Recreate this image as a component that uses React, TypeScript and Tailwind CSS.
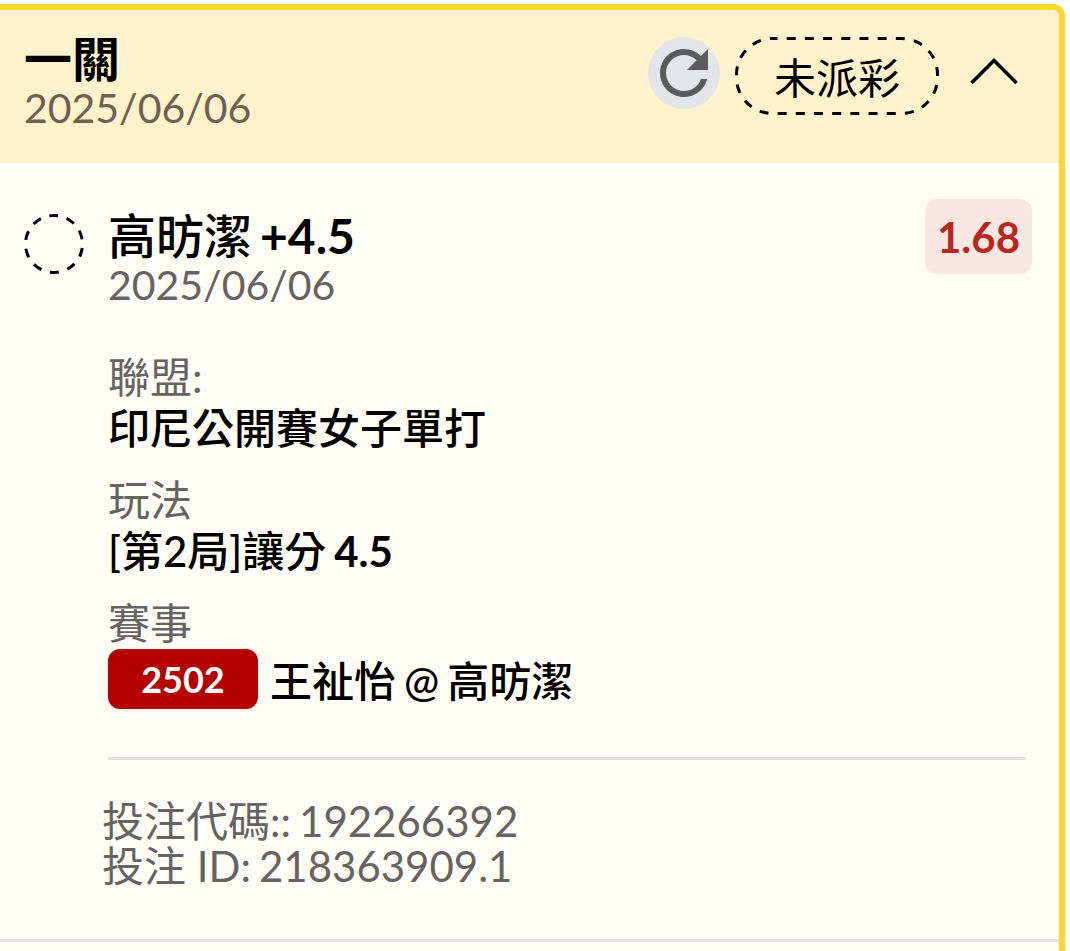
import { useState } from "react";
import { MdRefresh } from "react-icons/md";

const bet = {
  title: "一關",
  date: "2025/06/06",
  status: "未派彩",
  code: "192266392",
  id: "218363909.1",
};

const leg = {
  player: "高昉潔",
  handicap: "+4.5",
  date: "2025/06/06",
  odds: "1.68",
  league: "印尼公開賽女子單打",
  market: "[第2局]讓分",
  line: "4.5",
  eventNumber: "2502",
  away: "王祉怡",
  home: "高昉潔",
};

function StatusPill({ label }: { label: string }) {
  return (
    <div className="relative flex h-[78px] w-[204px] items-center justify-center text-[42px] leading-[48px]">
      <svg className="absolute inset-0" width="204" height="78" fill="none" aria-hidden="true">
        <rect
          x="1.5"
          y="1.5"
          width="201"
          height="75"
          rx="36"
          stroke="black"
          strokeWidth="3"
          strokeDasharray="9 9.19"
          strokeDashoffset="4"
        />
      </svg>
      <span className="pt-1">{label}</span>
    </div>
  );
}

function PendingMark() {
  return (
    <svg className="mt-[15px] shrink-0" width="60" height="60" fill="none" role="img" aria-label="未派彩">
      <circle
        cx="30"
        cy="30"
        r="28.5"
        stroke="black"
        strokeWidth="3"
        strokeDasharray="9 8.907"
        strokeDashoffset="4.5"
        transform="rotate(-91 30 30)"
      />
    </svg>
  );
}

function ChevronUp({ open }: { open: boolean }) {
  return (
    <svg className={open ? "" : "rotate-180"} width="48" height="28" fill="none" aria-hidden="true">
      <path d="M1.5 25 24 2.500 46.500 25" stroke="black" strokeWidth="3.500" />
    </svg>
  );
}

export default function App() {
  const [open, setOpen] = useState(true);

  return (
    <main className="min-h-screen bg-white pt-1 pr-[5px] font-['Lato','Noto_Sans_CJK_TC',sans-serif] text-black">
      <article className="min-h-[calc(100vh-4px)] rounded-tr-xl border-t-6 border-r-6 border-[#ffd630] bg-[#fffef5]">
        <header className="flex items-start justify-between rounded-tr-md bg-[#fff2cc] pt-[25px] pr-[41px] pb-[30px] pl-6">
          <div>
            <h1 className="text-[48px] leading-[48px] font-semibold">{bet.title}</h1>
            <p className="text-[41px] leading-[50px] text-[#6b6350]">{bet.date}</p>
          </div>
          <div className="flex items-start pt-[2px]">
            <button
              type="button"
              aria-label="重新整理"
              className="mr-[15px] flex size-[72px] items-center justify-center rounded-full bg-[#e4e5e9] text-[#5b5b5b]"
            >
              <MdRefresh size={72} />
            </button>
            <StatusPill label={bet.status} />
            <button
              type="button"
              aria-label="收合"
              aria-expanded={open}
              onClick={() => setOpen(!open)}
              className="ml-[31px] flex h-[70px] items-center"
            >
              <ChevronUp open={open} />
            </button>
          </div>
        </header>

        {open && (
          <section className="flex items-start gap-6 border-b-3 border-[#e4e2da] pt-9 pr-[27px] pb-[50px] pl-6">
            <PendingMark />
            <div className="grow">
              <div className="flex items-start justify-between">
                <div className="pt-[13px]">
                  <h2 className="flex gap-2 text-[48px] leading-[48px] font-medium">
                    <span>{leg.player}</span>
                    <span className="font-bold">{leg.handicap}</span>
                  </h2>
                  <p className="text-[41px] leading-[50px] text-[#666460]">{leg.date}</p>
                </div>
                <span className="flex h-[75px] items-center rounded-xl bg-[#f8e8e2] px-3 pt-px text-[42px] leading-[48px] font-bold text-[#b8261f]">
                  {leg.odds}
                </span>
              </div>

              <dl className="mt-[42px] flex flex-col gap-[21px] text-[42px] leading-[51px]">
                <div>
                  <dt className="text-[#666460]">聯盟:</dt>
                  <dd className="font-medium">{leg.league}</dd>
                </div>
                <div>
                  <dt className="text-[#666460]">玩法</dt>
                  <dd className="flex gap-2 font-medium">
                    <span>{leg.market}</span>
                    <span className="font-bold">{leg.line}</span>
                  </dd>
                </div>
                <div>
                  <dt className="text-[#666460]">賽事</dt>
                  <dd className="flex items-center gap-3 font-medium">
                    <span className="flex h-[60px] w-[150px] items-center justify-center rounded-xl bg-[#b50000] text-[36px] font-bold text-white">
                      {leg.eventNumber}
                    </span>
                    <span className="flex gap-2 pt-1">
                      <span>{leg.away}</span>
                      <span>@</span>
                      <span>{leg.home}</span>
                    </span>
                  </dd>
                </div>
              </dl>

              <div className="mt-12 mr-[6px] border-t-3 border-[#e4e2da]" />

              <div className="-ml-[6px] pt-[39px] text-[42px] leading-[45px] text-[#666460]">
                <p className="flex gap-2">
                  <span>投注代碼::</span>
                  <span>{bet.code}</span>
                </p>
                <p className="flex gap-2">
                  <span>投注 ID:</span>
                  <span>{bet.id}</span>
                </p>
              </div>
            </div>
          </section>
        )}
      </article>
    </main>
  );
}
